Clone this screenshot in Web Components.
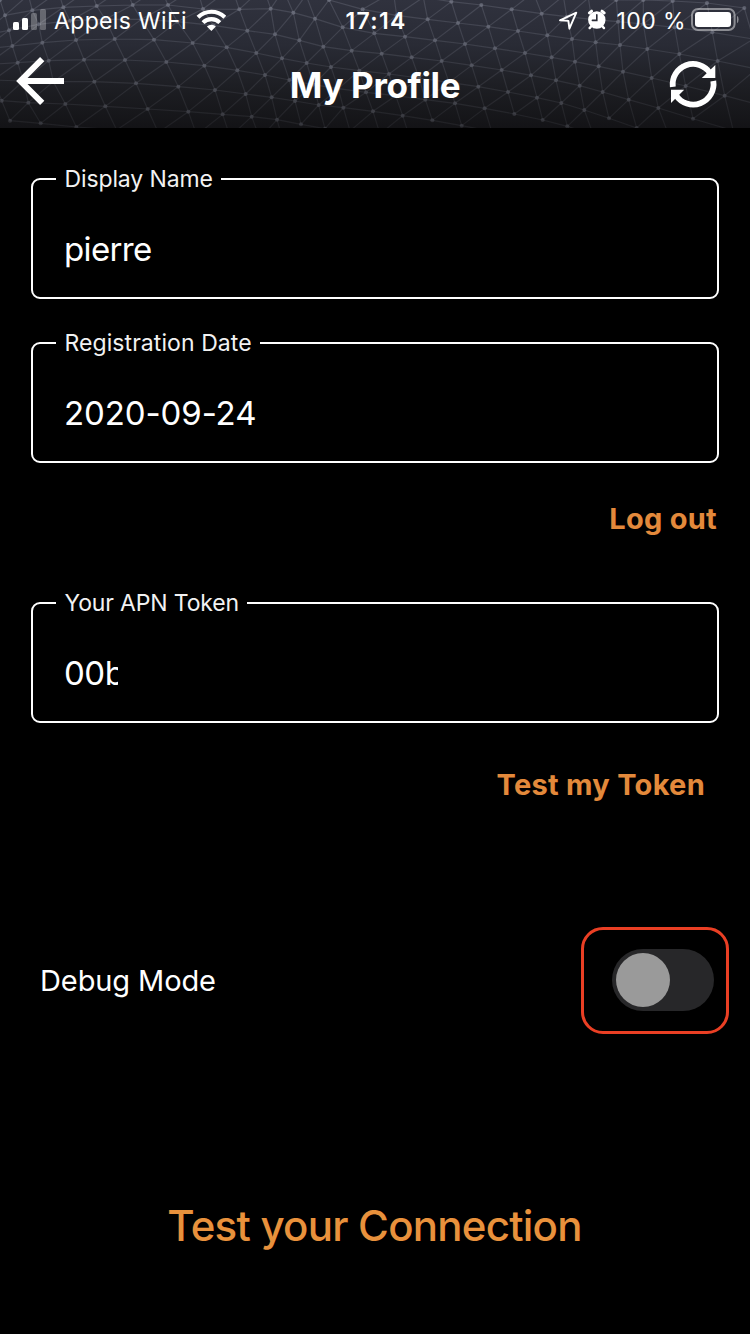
<!DOCTYPE html>
<html lang="en">
<head>
<meta charset="utf-8">
<title>My Profile</title>
<style>
  body {
    margin: 0;
    background: #000;
    color: #fff;
    font-family: Inter, "Liberation Sans", sans-serif;
  }
</style>
</head>
<body>
<profile-screen></profile-screen>

<script>
// Mesh nodes, row by row, on a 2250x384 canvas
const MESH_ROWS = [
  [[1600,-22],[1690,-12],[1765,-6],[1849,0],[1930,0],[2018,3],[2121,9],[2233,24]],
  [[1180,-25],[1270,-8],[1354,5],[1444,15],[1535,28],[1625,41],[1700,50],[1775,58],[1854,65],[1930,72],[2024,82],[2137,97],[2260,117]],
  [[0,0],[85,-15],[175,-25],[270,-35],[375,-40],[480,-40],[590,-40],[695,-38],[790,-38],[850,-30],[918,-15],[987,0],[1088,28],[1190,46],[1283,58],[1374,69],[1465,80],[1554,93],[1642,106],[1716,117],[1787,127],[1860,135],[1942,147],[2038,162],[2153,183],[2270,207]],
  [[15,46],[97,31],[190,22],[290,18],[398,15],[504,15],[609,27],[718,28],[812,26],[880,38],[945,56],[1028,82],[1123,100],[1215,110],[1305,121],[1395,132],[1485,145],[1575,159],[1655,172],[1725,185],[1796,199],[1869,215],[1955,234],[2057,258],[2174,287],[2290,318]],
  [[-60,108],[27,91],[116,73],[210,62],[316,58],[424,58],[532,65],[640,76],[742,92],[825,103],[898,121],[970,140],[1055,152],[1145,161],[1235,172],[1325,183],[1415,196],[1505,210],[1593,226],[1668,241],[1739,257],[1808,276],[1886,299],[1975,324],[2079,356],[2200,392]],
  [[-50,148],[37,138],[127,128],[228,120],[344,117],[462,119],[578,129],[680,142],[769,159],[846,175],[920,189],[993,201],[1078,212],[1167,222],[1257,234],[1347,247],[1435,260],[1524,276],[1611,293],[1684,309],[1753,330],[1827,355],[1910,384],[2010,415]],
  [[-40,194],[53,188],[146,182],[252,179],[375,180],[499,186],[613,197],[712,211],[795,225],[868,240],[940,254],[1015,266],[1098,277],[1187,287],[1276,299],[1365,310],[1454,325],[1543,342],[1628,360],[1702,379],[1780,405]],
  [[-20,240],[70,243],[160,245],[283,245],[408,250],[535,260],[645,270],[737,282],[815,292],[885,303],[956,315],[1030,323],[1119,334],[1208,347],[1297,361],[1385,377],[1475,394]],
  [[5,302],[85,308],[196,312],[316,319],[443,327],[565,335],[668,343],[755,350],[831,359],[903,373],[975,386],[1050,393],[1140,402],[1230,415]],
  [[30,362],[122,370],[229,381],[350,390],[475,398],[590,405],[690,410],[780,416],[850,426]]
];

class MeshBackground extends HTMLElement {
  constructor() {
    super();
    this.attachShadow({ mode: "open" });
  }

  // index of the node of the next row that sits below x
  nodeBelow(row, x) {
    let best = -1;
    let bestDistance = 40;
    row.forEach((p, i) => {
      const distance = Math.abs(p[0] - x - 22);
      if (distance < bestDistance) {
        best = i;
        bestDistance = distance;
      }
    });
    return best;
  }

  connectedCallback() {
    let lines = "";
    let dots = "";
    MESH_ROWS.forEach((row, r) => {
      lines += "M" + row.map((p) => p.join(" ")).join("L");
      row.forEach(([x, y]) => {
        dots += `<circle cx="${x}" cy="${y}" r="6" fill="url(#dots)"/>`;
        const next = MESH_ROWS[r + 1];
        if (!next) return;
        // each node joins the one below it and the one below-left
        const k = this.nodeBelow(next, x);
        if (k < 0) return;
        lines += `M${x} ${y}L${next[k].join(" ")}`;
        if (k > 0) lines += `M${x} ${y}L${next[k - 1].join(" ")}`;
      });
    });

    this.shadowRoot.innerHTML = `
      <style>
        :host {
          display: block;
          background: linear-gradient(#30323e 0, #292b35 35%, #1d1e23 68%, #131316 100%);
        }
        svg { display: block; width: 100%; height: 100%; }
      </style>
      <svg viewBox="0 0 2250 384" preserveAspectRatio="none">
        <defs>
          <linearGradient id="fade" x1="0" y1="0" x2="0" y2="384" gradientUnits="userSpaceOnUse">
            <stop offset="0" stop-color="#a9adbd" stop-opacity=".2"/>
            <stop offset="1" stop-color="#a9adbd" stop-opacity=".08"/>
          </linearGradient>
          <linearGradient id="dots" x1="0" y1="0" x2="0" y2="384" gradientUnits="userSpaceOnUse">
            <stop offset="0" stop-color="#a9adbd" stop-opacity=".36"/>
            <stop offset="1" stop-color="#a9adbd" stop-opacity=".15"/>
          </linearGradient>
        </defs>
        <path d="${lines}" fill="none" stroke="url(#fade)" stroke-width="3.4"/>
        ${dots}
      </svg>
    `;
  }
}

class StatusBar extends HTMLElement {
  constructor() {
    super();
    this.attachShadow({ mode: "open" });
    this.shadowRoot.innerHTML = `
      <style>
        :host {
          display: grid;
          grid-template-columns: 1fr auto 1fr;
          align-items: center;
          height: 42px;
          padding: 0 11px 0 13px;
          box-sizing: border-box;
          font-size: 23px;
          line-height: 42px;
          white-space: nowrap;
        }
        .side { display: flex; align-items: center; }
        .end { justify-content: flex-end; }
        .carrier { margin: 0 9px 0 8px; letter-spacing: .35px; }
        .time { font-weight: 600; letter-spacing: 1.3px; }
        .level { margin: 0 5px 0 8.5px; letter-spacing: .4px; }
        svg { display: block; flex: none; }
      </style>
      <div class="side">
        <svg width="33" height="42" viewBox="13 0 33 42" fill="#fff">
          <rect x="13" y="22" width="6" height="8" rx="1.5"/>
          <rect x="22" y="18" width="6" height="12" rx="1.5"/>
          <rect x="31" y="13" width="6" height="17" rx="1.5" opacity=".27"/>
          <rect x="40" y="9" width="6" height="21" rx="1.5" opacity=".27"/>
        </svg>
        <span class="carrier">Appels WiFi</span>
        <svg width="30" height="42" viewBox="196 0 30 42">
          <g fill="none" stroke="#fff" stroke-width="4.1">
            <path d="M198 17.2A19.2 19.2 0 0 1 224.8 17.2"/>
            <path d="M203 22.6A12 12 0 0 1 219.8 22.6"/>
          </g>
          <path d="M211.4 31L206.9 26.4A6.6 6.6 0 0 1 215.9 26.4Z" fill="#fff"/>
        </svg>
      </div>
      <span class="time">17:14</span>
      <div class="side end">
        <svg width="50" height="42" viewBox="558 0 50 42">
          <path d="M560 20.3L576.3 12.7L569.4 28.7L568.4 20.9Z" fill="none" stroke="#fff" stroke-width="1.9" stroke-linejoin="round"/>
          <g stroke="#fff" fill="none" stroke-linecap="round">
            <circle cx="596.8" cy="20" r="8.7" fill="#fff" stroke="none"/>
            <path d="M589.4 13A10.5 10.5 0 0 1 591.6 11.2M602 11.2A10.5 10.5 0 0 1 604.2 13" stroke-width="3"/>
            <path d="M591.5 26L589.6 28.1M602.1 26L604 28.1" stroke-width="2.4"/>
            <path d="M596.8 14.8V20.4H592.4" stroke="#292b35" stroke-width="1.6"/>
          </g>
        </svg>
        <span class="level">100 %</span>
        <svg width="48" height="42" viewBox="691 0 48 42">
          <rect x="692" y="9" width="42.6" height="21" rx="6" fill="none" stroke="#fff" stroke-opacity=".45" stroke-width="2"/>
          <rect x="695" y="12" width="36" height="15" rx="3.2" fill="#fff"/>
          <path d="M737 15.7Q738.6 16.6 738.6 19.4T737 23.2Z" fill="#fff" fill-opacity=".45"/>
        </svg>
      </div>
    `;
  }
}

class NavBar extends HTMLElement {
  constructor() {
    super();
    this.attachShadow({ mode: "open" });
    this.shadowRoot.innerHTML = `
      <style>
        :host {
          display: grid;
          grid-template-columns: 1fr auto 1fr;
          height: 86px;
        }
        h1 {
          margin: 0;
          font-size: 35px;
          font-weight: 700;
          line-height: 87px;
          letter-spacing: -.35px;
          white-space: nowrap;
        }
        svg { display: block; }
        .refresh { justify-self: end; }
      </style>
      <svg width="80" height="86" viewBox="0 42 80 86" fill="none" stroke="#fff" stroke-width="6">
        <path d="M64 81H20M42.2 59.2L20.4 81L42.2 102.8"/>
      </svg>
      <h1><slot></slot></h1>
      <svg class="refresh" width="80" height="86" viewBox="670 42 80 86" style="overflow: visible">
        <g fill="none" stroke="#fff" stroke-width="5.8">
          <path d="M672.8 86.8A20.4 20.4 0 0 1 710 73"/>
          <path d="M713.3 81A20.4 20.4 0 0 1 676 95.2"/>
        </g>
        <path d="M715.3 65V78H701.8Z" fill="#fff"/>
        <path d="M671 103V89.8H684.2Z" fill="#fff"/>
      </svg>
    `;
  }
}

class OutlinedField extends HTMLElement {
  constructor() {
    super();
    this.attachShadow({ mode: "open" });
  }

  connectedCallback() {
    this.shadowRoot.innerHTML = `
      <style>
        :host { display: block; }
        fieldset {
          box-sizing: border-box;
          height: 134px;
          margin: 0;
          padding: 0 23px;
          border: 2px solid #fff;
          border-radius: 9px;
        }
        legend {
          padding: 0 8px 0 8.5px;
          font-size: 23px;
          line-height: 28px;
          letter-spacing: var(--label-spacing, 0);
          color: #f2f2f2;
        }
        .value {
          margin: 36px 0 0 8px;
          font-size: 33px;
          line-height: 40px;
          letter-spacing: var(--value-spacing, 0);
          overflow: hidden;
          white-space: nowrap;
        }
        :host([masked]) .value { width: 54px; }
      </style>
      <fieldset>
        <legend>${this.getAttribute("label")}</legend>
        <div class="value"><slot></slot></div>
      </fieldset>
    `;
  }
}

class TextAction extends HTMLElement {
  constructor() {
    super();
    this.attachShadow({ mode: "open" });
    this.shadowRoot.innerHTML = `
      <style>
        :host { display: flex; justify-content: flex-end; }
        :host([large]) { justify-content: center; }
        button {
          padding: 0;
          border: 0;
          background: none;
          color: #e3893b;
          font: 700 29px/40px Inter, "Liberation Sans", sans-serif;
          letter-spacing: .28px;
          white-space: nowrap;
        }
        :host([large]) button {
          color: #e8913c;
          font-weight: 500;
          font-size: 42px;
          line-height: 60px;
          letter-spacing: -.75px;
        }
      </style>
      <button type="button"><slot></slot></button>
    `;
  }
}

class ToggleRow extends HTMLElement {
  constructor() {
    super();
    this.attachShadow({ mode: "open" });
    this.shadowRoot.innerHTML = `
      <style>
        :host {
          display: flex;
          align-items: center;
          justify-content: space-between;
          font-size: 29px;
          line-height: 40px;
          letter-spacing: -.1px;
        }
        .frame {
          box-sizing: border-box;
          width: 148px;
          height: 107px;
          padding: 19px 12px 0 28px;
          border: 3px solid #ea3f24;
          border-radius: 22px;
        }
        .track {
          box-sizing: border-box;
          width: 102px;
          height: 62px;
          padding: 4px;
          border-radius: 31px;
          background: #272729;
        }
        .knob {
          width: 54px;
          height: 54px;
          border-radius: 50%;
          background: #9a9a9a;
        }
      </style>
      <slot></slot>
      <div class="frame"><div class="track"><div class="knob"></div></div></div>
    `;
  }
}

class ProfileScreen extends HTMLElement {
  constructor() {
    super();
    this.attachShadow({ mode: "open" });
    this.shadowRoot.innerHTML = `
      <style>
        :host {
          display: block;
          width: 750px;
          height: 1334px;
          overflow: hidden;
        }
        header { display: grid; height: 128px; }
        header > * { grid-area: 1 / 1; min-width: 0; }
        .bars { z-index: 1; }
        mesh-background { height: 128px; overflow: hidden; }
        main {
          display: flex;
          flex-direction: column;
          padding: 37px 31px 0;
        }
        .name { --label-spacing: -.12px; --value-spacing: -.65px; }
        .date { margin-top: 30px; --label-spacing: .07px; --value-spacing: -.1px; }
        .logout { margin: 36px 2px 0 0; }
        .token { margin-top: 50px; --label-spacing: -.16px; --value-spacing: -.5px; }
        .test { margin: 42px 14px 0 0; }
        toggle-row { margin: 122px -10px 0 9px; }
        .connection { margin: 162px 1px 0 0; }
      </style>
      <header>
        <mesh-background></mesh-background>
        <div class="bars">
          <status-bar></status-bar>
          <nav-bar>My Profile</nav-bar>
        </div>
      </header>
      <main>
        <outlined-field class="name" label="Display Name">pierre</outlined-field>
        <outlined-field class="date" label="Registration Date">2020-09-24</outlined-field>
        <text-action class="logout">Log out</text-action>
        <outlined-field class="token" label="Your APN Token" masked>00b</outlined-field>
        <text-action class="test">Test my Token</text-action>
        <toggle-row>Debug Mode</toggle-row>
        <text-action class="connection" large>Test your Connection</text-action>
      </main>
    `;
  }
}

customElements.define("mesh-background", MeshBackground);
customElements.define("status-bar", StatusBar);
customElements.define("nav-bar", NavBar);
customElements.define("outlined-field", OutlinedField);
customElements.define("text-action", TextAction);
customElements.define("toggle-row", ToggleRow);
customElements.define("profile-screen", ProfileScreen);
</script>
</body>
</html>
